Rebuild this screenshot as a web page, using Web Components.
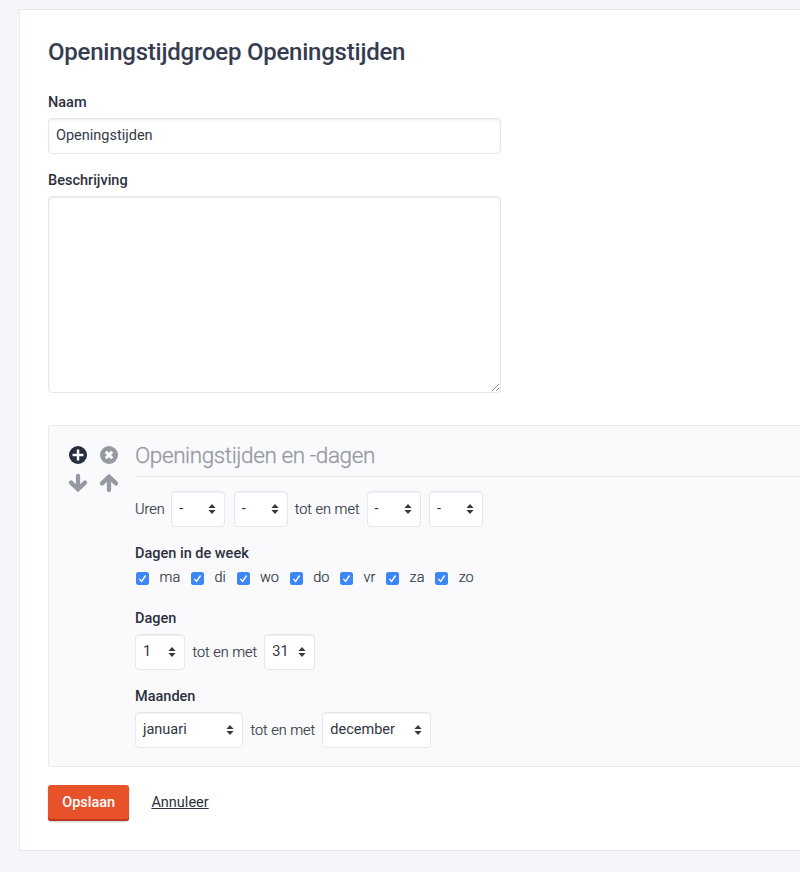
<!DOCTYPE html>
<html lang="nl">
<head>
<meta charset="utf-8">
<title>Openingstijden</title>
<style>
html{background:#f5f6fa}
body{margin:0;overflow:hidden;font:400 14.5px/20px Roboto,sans-serif;color:#333a47}
</style>
</head>
<body>
<opening-page></opening-page>
<script>
const define = (name, html, setup) => customElements.define(name, class extends HTMLElement {
  connectedCallback() {
    if (this.shadowRoot) return;
    const t = document.createElement('template');
    t.innerHTML = html;
    this.attachShadow({mode: 'open'}).append(t.content.cloneNode(true));
    if (setup) setup(this, this.shadowRoot);
  }
});

define('form-field', `<style>
:host{display:block}
.label{font-weight:500;line-height:22px;height:20px;margin-bottom:6px;color:#2b303d;white-space:nowrap}
</style><div class="label"></div><slot></slot>`, (h, r) => r.querySelector('.label').textContent = h.getAttribute('label'));

define('text-box', `<style>
:host{display:block;position:relative;box-sizing:border-box;width:452.5px;height:36px;border:1px solid #e6e7ed;border-radius:4px;background:#fff;box-shadow:inset 0 1px 2px #e9eaef;padding:7px 7px;color:#333a47}
:host([multiline]){height:197px}
svg{display:none;position:absolute;right:0;bottom:0}
:host([multiline]) svg{display:block}
</style><slot></slot><svg width="9" height="9" viewBox="0 0 9 9" fill="none" stroke="#777" stroke-width=".8"><path d="M1 8 8 1M5 8 8 5"/></svg>`);

define('select-box', `<style>
:host{display:flex;flex:none;align-items:center;justify-content:space-between;box-sizing:border-box;width:54px;height:36px;border:1px solid #e6e7ed;border-radius:4px;background:#fff;box-shadow:inset 0 1px 1px #eeeff3;padding:0 8px 0 7px;font-weight:400;color:#2f3542;-webkit-text-stroke:0}
svg{display:block}
</style><slot></slot><svg width="8" height="10" viewBox="0 0 8 10" fill="#333941"><path d="M4 0 7.6 4H.4zM4 10 .4 6h7.2z"/></svg>`);

define('check-item', `<style>
:host{display:flex;gap:10.2px;font-weight:300;line-height:22px;white-space:nowrap;-webkit-text-stroke:.2px}
svg{display:block;margin-top:5px}
</style><svg width="13" height="13" viewBox="0 0 13 13"><rect width="13" height="13" rx="2.5" fill="#3d86f7"/><path d="M3.4 6.9 5.6 9.4 9.6 3.5" fill="none" stroke="#fff" stroke-width="1.4"/></svg><slot></slot>`);

define('control-row', `<style>
:host{display:flex;align-items:center;height:36px;gap:7px;font-weight:300;white-space:nowrap;-webkit-text-stroke:.2px}
::slotted(span){padding-top:1px}
</style><slot></slot>`);

const icons = {
  plus: '<circle cx="9" cy="9" r="9" fill="#272c3e"/><path d="M9 4.2v9.6M4.2 9h9.6" stroke="#fff" stroke-width="2.8" stroke-linecap="square" transform="translate(1.1 1.1) scale(.88)"/>',
  remove: '<circle cx="9" cy="9" r="9" fill="#9699a2"/><path d="m5.8 5.8 6.4 6.4m0-6.4-6.4 6.4" stroke="#fff" stroke-width="3"/>',
  down: '<path d="M9 1.9v13M2 8.6l7 6.7 7-6.7" fill="none" stroke="#9699a2" stroke-width="4.3" stroke-linecap="round" stroke-linejoin="miter"/>',
  up: '<path d="M9 16.1v-13M2 9.4l7-6.7 7 6.7" fill="none" stroke="#9699a2" stroke-width="4.3" stroke-linecap="round" stroke-linejoin="miter"/>'
};
define('action-icon', `<style>
:host{display:block;width:18px;height:18px}svg{display:block;overflow:visible}
</style><svg width="18" height="18" viewBox="0 0 18 18"></svg>`, (h, r) => r.querySelector('svg').innerHTML = icons[h.getAttribute('name')]);

define('time-group', `<style>
:host{display:grid;grid-template-columns:48px 1fr;column-gap:18px;box-sizing:border-box;height:342px;border:1px solid #e9eaee;border-right:0;border-radius:2px 0 0 2px;background:#fafafc;padding:15px 0 0 20px}
.icons{display:grid;grid-template-columns:18px 18px;gap:10px 12.5px;align-content:start;padding-top:5px}
.title{font-weight:300;font-size:22.5px;letter-spacing:-.4px;line-height:28px;height:35px;border-bottom:1px solid #e7e8ec;color:#969aa2;-webkit-text-stroke:.3px;margin-bottom:14px;white-space:nowrap}
</style><div class="icons"><action-icon name="plus"></action-icon><action-icon name="remove"></action-icon><action-icon name="down"></action-icon><action-icon name="up"></action-icon></div>
<div><div class="title"><slot name="title"></slot></div><slot></slot></div>`);

define('save-button', `<style>
:host{display:block;box-sizing:border-box;width:81.4px;height:36px;border-radius:3px;background:#e8522a;box-shadow:inset 0 -2px #bd3b1d,0 1px 2px #0003;color:#fff;font-weight:500;line-height:35px;text-align:center}
</style><slot></slot>`);

define('main-panel', `<style>
:host{display:block;box-sizing:border-box;height:842px;margin:9px 0 21px 19px;border:1px solid #e9eaee;border-right:0;background:#fff;padding:26px 0 0 28px}
</style><slot></slot>`);

define('opening-page', `<style>
:host{display:flow-root}
h1{margin:0 0 26px;font-size:24px;letter-spacing:-.23px;line-height:32px;height:30px;font-weight:500;color:#363c50;white-space:nowrap}
.gap{margin-top:16px}
time-group{margin-top:32px}
.week{display:flex;gap:11px;padding-left:1.4px;margin-top:-2px;height:20px}
.days{margin-top:21px}
.sm{width:50.4px}.lg{width:108.4px}
.buttons{display:flex;margin-top:18px;gap:22px}
.cancel{line-height:35px;text-decoration:underline;color:#2b303d}
</style>
<main-panel>
<h1><span>Openingstijdgroep Openingstijden</span></h1>
<form-field label="Naam"><text-box>Openingstijden</text-box></form-field>
<form-field class="gap" label="Beschrijving"><text-box multiline></text-box></form-field>
<time-group><span slot="title">Openingstijden en -dagen</span>
<control-row><span style="margin-right:-.6px">Uren</span><select-box>-</select-box><select-box style="margin-left:1.5px">-</select-box><span>tot en met</span><select-box>-</select-box><select-box style="margin-left:1.5px">-</select-box></control-row>
<form-field class="gap" label="Dagen in de week"><div class="week"><check-item>ma</check-item><check-item>di</check-item><check-item>wo</check-item><check-item>do</check-item><check-item>vr</check-item><check-item>za</check-item><check-item>zo</check-item></div></form-field>
<form-field class="days" label="Dagen"><control-row><select-box class="sm">1</select-box><span>tot en met</span><select-box class="sm">31</select-box></control-row></form-field>
<form-field class="gap" label="Maanden"><control-row><select-box class="lg">januari</select-box><span>tot en met</span><select-box class="lg">december</select-box></control-row></form-field>
</time-group>
<div class="buttons"><save-button>Opslaan</save-button><span class="cancel">Annuleer</span></div>
</main-panel>`);
</script>
</body>
</html>
